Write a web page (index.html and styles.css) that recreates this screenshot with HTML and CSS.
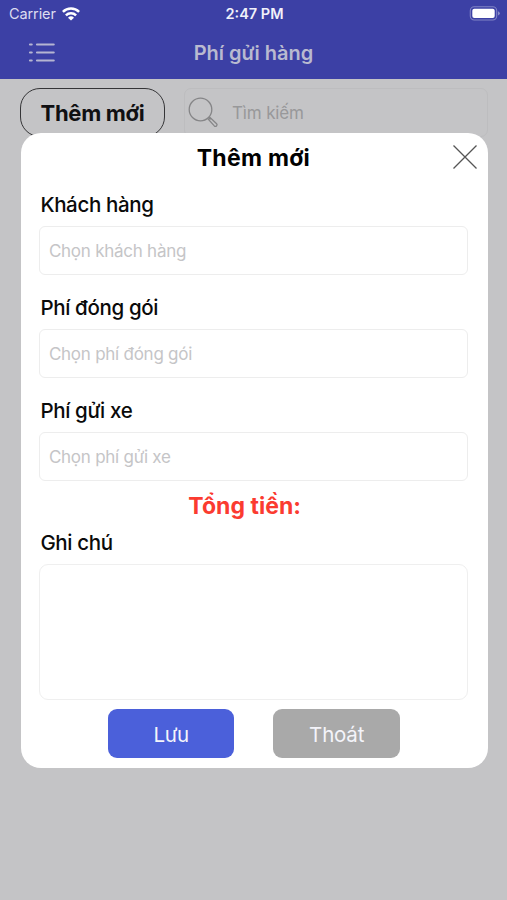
FILE: index.html
```html
<!DOCTYPE html>
<html lang="vi">
<head>
<meta charset="utf-8">
<title>Phí gửi hàng</title>
<link rel="stylesheet" href="styles.css">
</head>
<body>
<div class="screen">
  <header class="header">
    <div class="status">
      <div class="carrier"><span>Carrier</span>
        <svg class="wifi" width="18" height="14" viewBox="0 0 18 14" fill="none" stroke="#fff" stroke-width="2.5"><path d="M.9 4.9a11.6 11.6 0 0 1 16.2 0M3.9 8.3a7.3 7.3 0 0 1 10.2 0"/><path d="M9 13.6 6 10.7a4.3 4.3 0 0 1 6 0z" fill="#fff" stroke="none"/></svg>
      </div>
      <span class="time">2:47 PM</span>
      <svg class="battery" width="31" height="15" viewBox="0 0 31 15"><rect x="1.3" y=".8" width="26.4" height="13.2" rx="4" fill="none" stroke="#8083c5" stroke-width="1.1"/><rect x="3.3" y="2.7" width="22.4" height="9.4" rx="2" fill="#fff"/><path d="M29.2 5.2q3 2.2 0 4.4z" fill="#9c9fd0"/></svg>
    </div>
    <div class="navbar">
      <svg class="menu" width="27" height="20" viewBox="0 0 27 20" stroke="#b5b5d2" stroke-width="2.2" stroke-linecap="round"><path d="M2 1.5h1.7M9 1.5h16.7M2 9.5h1.7M9 9.5h16.7M2 17.5h1.7M9 17.5h16.7"/></svg>
      <h1 class="page-title">Phí gửi hàng</h1>
    </div>
  </header>
  <div class="toolbar">
    <button class="add">Thêm mới</button>
    <div class="search">
      <svg width="31" height="31" viewBox="0 0 31 31" fill="none" stroke="#858587" stroke-width="1.3"><circle cx="12.5" cy="12.5" r="11.3"/><path d="m20.5 20.5 2 2M22 20.5l6.6 6.2q1 1.2-.1 2.2t-2.2 0l-6-6.6z"/></svg>
      <span class="search-text">Tìm kiếm</span>
    </div>
  </div>
  <section class="modal">
    <div class="modal-head">
      <h2 class="modal-title">Thêm mới</h2>
      <svg class="close" width="24" height="24" viewBox="0 0 24 24" stroke="#555" stroke-width="1.3"><path d="m.5.5 23 23m0-23-23 23"/></svg>
    </div>
    <label class="label customer">Khách hàng</label>
    <div class="field"><span class="hint">Chọn khách hàng</span></div>
    <label class="label packing">Phí đóng gói</label>
    <div class="field"><span class="hint">Chọn phí đóng gói</span></div>
    <label class="label shipping">Phí gửi xe</label>
    <div class="field"><span class="hint">Chọn phí gửi xe</span></div>
    <div class="total"><span>Tổng tiền:</span></div>
    <label class="label note">Ghi chú</label>
    <div class="notes"></div>
    <div class="actions">
      <button class="action save">Lưu</button>
      <button class="action exit">Thoát</button>
    </div>
  </section>
</div>
</body>
</html>
```

FILE: styles.css
```css
* { box-sizing: border-box; }
body { margin: 0; font-family: Inter, "Liberation Sans", sans-serif; }
button { font-family: inherit; padding: 0; white-space: nowrap; }
h1, h2 { margin: 0; }
svg { display: block; flex: none; }
.screen { position: relative; width: 507px; height: 900px; background: #c4c4c6; overflow: hidden; }
.header { height: 79px; background: #3c40a5; }
.status { height: 27px; display: grid; grid-template-columns: 1fr auto 1fr; align-items: center; padding: 0 7px 0 9px; color: #fff; }
.carrier { display: flex; align-items: center; gap: 6px; color: #dcdcf0; font-size: 14.5px; letter-spacing: -.1px; }
.time { font-weight: 600; font-size: 14.5px; color: #f0f0fa; }
.battery { justify-self: end; }
.navbar { height: 51px; display: grid; grid-template-columns: 1fr auto 1fr; align-items: center; padding: 0 28px; }
.page-title { font-size: 20px; line-height: 26px; font-weight: 600; color: #b9bad0; }
.toolbar { display: flex; gap: 19px; padding: 9px 19px 0 20px; }
.add { width: 145px; height: 49px; border: 1.5px solid #353537; border-radius: 20px; background: transparent; font-size: 22px; font-weight: 700; letter-spacing: -.3px; color: #101012; }
.search { flex: 1; height: 49px; border: 1px solid #bdbdbf; border-radius: 7px; display: flex; align-items: center; gap: 13px; padding-left: 3px; }
.search-text { color: #98989a; font-size: 17px; letter-spacing: -.15px; }
.modal { position: absolute; left: 20.5px; top: 133px; width: 467px; height: 635px; padding: 0 19.5px 0 18.9px; border-radius: 20px; background: #fff; }
.modal-head { height: 48px; display: grid; grid-template-columns: 1fr auto 1fr; align-items: center; margin-right: -9px; margin-left: -9.6px; }
.modal-title { grid-column: 2; font-size: 23px; line-height: 28px; padding-top: 1px; font-weight: 700; letter-spacing: .3px; }
.close { justify-self: end; }
.label { display: flex; align-items: center; height: 45px; padding: 1px 0 0 1px; font-size: 20.5px; font-weight: 500; letter-spacing: -.35px; color: #0a0a0a; }
.packing, .shipping { height: 54px; padding-top: 10px; }
.field { height: 49px; border: 1px solid #ededed; border-radius: 6px; display: flex; align-items: center; padding: 1px 0 0 8.5px; }
.hint { color: #c5c5c7; font-size: 17px; letter-spacing: -.25px; }
.total { height: 47px; display: flex; align-items: center; justify-content: center; padding: 2px 18px 0 0; color: #fb3b30; font-size: 23px; font-weight: 700; letter-spacing: .05px; }
.note { height: 36px; padding: 0 0 7px 1px; }
.notes { height: 136px; border: 1px solid #efefef; border-radius: 9px; }
.actions { display: flex; gap: 39px; padding: 9.4px 0 0 68.5px; }
.action { width: 126.5px; height: 49px; border: 0; border-radius: 9px; font-size: 20.5px; color: #f4f4fa; padding-top: 1px; }
.action.save { background: #4b60da; letter-spacing: -.3px; }
.action.exit { background: #a9a9a9; letter-spacing: -.2px; }
```
